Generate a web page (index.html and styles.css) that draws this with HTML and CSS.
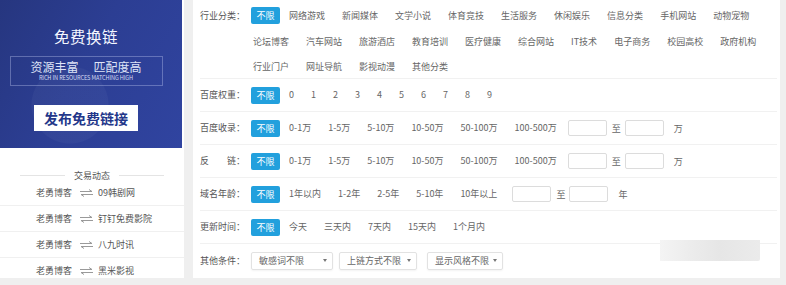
FILE: index.html
```html
<!DOCTYPE html>
<html lang="zh-CN">
<head>
  <meta charset="UTF-8">
  <title>免费换链</title>
  <link rel="stylesheet" href="styles.css">
</head>
<body>

  <div class="page">
    <aside class="side">
      <div class="banner">
        <div class="banner-title">免费换链</div>
        <div class="banner-box">
          <div class="banner-slogan"><span>资源丰富</span><span>匹配度高</span></div>
          <div class="banner-sub">RICH IN RESOURCES MATCHING HIGH</div>
        </div>
        <div class="banner-button">发布免费链接</div>
      </div>

      <div class="deals-title">交易动态</div>
      <ul class="deals">
        <li>老勇博客 <svg class="swap" width="13" height="8" viewBox="0 0 13 8"><path d="M0 2.5H12L9 0.5M13 5.5H1L4 7.5" fill="none" stroke="#9a9a9a" stroke-width="1"/></svg> 09韩剧网</li>
        <li>老勇博客 <svg class="swap" width="13" height="8" viewBox="0 0 13 8"><path d="M0 2.5H12L9 0.5M13 5.5H1L4 7.5" fill="none" stroke="#9a9a9a" stroke-width="1"/></svg> 钉钉免费影院</li>
        <li>老勇博客 <svg class="swap" width="13" height="8" viewBox="0 0 13 8"><path d="M0 2.5H12L9 0.5M13 5.5H1L4 7.5" fill="none" stroke="#9a9a9a" stroke-width="1"/></svg> 八九时讯</li>
        <li>老勇博客 <svg class="swap" width="13" height="8" viewBox="0 0 13 8"><path d="M0 2.5H12L9 0.5M13 5.5H1L4 7.5" fill="none" stroke="#9a9a9a" stroke-width="1"/></svg> 黑米影视</li>
      </ul>
    </aside>

    <main class="filters">
      <div class="row row-multi">
        <div class="label">行业分类：</div>
        <div class="opts">
          <span class="opt on">不限</span>
          <span class="opt">网络游戏</span>
          <span class="opt">新闻媒体</span>
          <span class="opt">文学小说</span>
          <span class="opt">体育竞技</span>
          <span class="opt">生活服务</span>
          <span class="opt">休闲娱乐</span>
          <span class="opt">信息分类</span>
          <span class="opt">手机网站</span>
          <span class="opt">动物宠物</span>
          <span class="opt">论坛博客</span>
          <span class="opt">汽车网站</span>
          <span class="opt">旅游酒店</span>
          <span class="opt">教育培训</span>
          <span class="opt">医疗健康</span>
          <span class="opt">综合网站</span>
          <span class="opt">IT技术</span>
          <span class="opt">电子商务</span>
          <span class="opt">校园高校</span>
          <span class="opt">政府机构</span>
          <span class="opt">行业门户</span>
          <span class="opt">网址导航</span>
          <span class="opt">影视动漫</span>
          <span class="opt">其他分类</span>
        </div>
      </div>

      <div class="row">
        <div class="label">百度权重：</div>
        <div class="opts">
          <span class="opt on">不限</span>
          <span class="opt">0</span>
          <span class="opt">1</span>
          <span class="opt">2</span>
          <span class="opt">3</span>
          <span class="opt">4</span>
          <span class="opt">5</span>
          <span class="opt">6</span>
          <span class="opt">7</span>
          <span class="opt">8</span>
          <span class="opt">9</span>
        </div>
      </div>

      <div class="row">
        <div class="label">百度收录：</div>
        <div class="opts">
          <span class="opt on">不限</span>
          <span class="opt">0-1万</span>
          <span class="opt">1-5万</span>
          <span class="opt">5-10万</span>
          <span class="opt">10-50万</span>
          <span class="opt">50-100万</span>
          <span class="opt">100-500万</span>
          <input class="range range-first" type="text">
          <span class="to">至</span>
          <input class="range" type="text">
          <span class="unit">万</span>
        </div>
      </div>

      <div class="row">
        <div class="label"><span class="spread">反链</span>：</div>
        <div class="opts">
          <span class="opt on">不限</span>
          <span class="opt">0-1万</span>
          <span class="opt">1-5万</span>
          <span class="opt">5-10万</span>
          <span class="opt">10-50万</span>
          <span class="opt">50-100万</span>
          <span class="opt">100-500万</span>
          <input class="range range-first" type="text">
          <span class="to">至</span>
          <input class="range" type="text">
          <span class="unit">万</span>
        </div>
      </div>

      <div class="row">
        <div class="label">域名年龄：</div>
        <div class="opts">
          <span class="opt on">不限</span>
          <span class="opt">1年以内</span>
          <span class="opt">1-2年</span>
          <span class="opt">2-5年</span>
          <span class="opt">5-10年</span>
          <span class="opt">10年以上</span>
          <input class="range" type="text">
          <span class="to">至</span>
          <input class="range" type="text">
          <span class="unit">年</span>
        </div>
      </div>

      <div class="row">
        <div class="label">更新时间：</div>
        <div class="opts">
          <span class="opt on">不限</span>
          <span class="opt">今天</span>
          <span class="opt">三天内</span>
          <span class="opt">7天内</span>
          <span class="opt">15天内</span>
          <span class="opt">1个月内</span>
        </div>
      </div>

      <div class="row row-last">
        <div class="label">其他条件：</div>
        <div class="opts">
          <div class="select select-a">敏感词不限<i class="caret"></i></div>
          <div class="select select-b">上链方式不限<i class="caret"></i></div>
          <div class="select select-c">显示风格不限<i class="caret"></i></div>
        </div>
      </div>

      <div class="mark"></div>
    </main>
  </div>

</body>
</html>
```

FILE: styles.css
```css
* {
  margin: 0;
  padding: 0;
  box-sizing: border-box;
}

body {
  width: 786px;
  height: 285px;
  overflow: hidden;
  background-color: #efefef;
  font-family: "Noto Sans CJK SC", "Noto Sans", sans-serif;
  font-size: 9px;
  color: #666;
}

.page {
  display: flex;
  gap: 9px;
  height: 278px;
}

/* left column */

.side {
  width: 184px;
  background-color: #fff;
  overflow: hidden;
}

.banner {
  width: 182px;
  height: 148px;
  padding-right: 10px;
  display: flex;
  flex-direction: column;
  align-items: center;
  background:
    radial-gradient(circle at 70px 105px, rgba(255, 255, 255, 0.035) 0, rgba(255, 255, 255, 0.035) 38px, transparent 39px),
    linear-gradient(120deg, #26367f 0%, #2c3e93 45%, #3044a0 100%);
}

.banner-title {
  margin-top: 26px;
  font-size: 15.5px;
  line-height: 20px;
  color: #f4f6ff;
  letter-spacing: 0.5px;
}

.banner-box {
  margin-top: 10px;
  width: 153px;
  height: 30px;
  border: 1px solid rgba(200, 210, 245, 0.35);
  text-align: center;
}

.banner-slogan {
  margin-top: 3px;
  display: flex;
  justify-content: center;
  gap: 15px;
  font-size: 12px;
  line-height: 14px;
  color: #dfe4f7;
}

.banner-sub {
  font-size: 5.6px;
  line-height: 8px;
  color: #d5dbf2;
  letter-spacing: -0.1px;
}

.banner-button {
  margin-top: 19px;
  width: 104px;
  height: 26px;
  line-height: 26px;
  background-color: #fff;
  color: #23378a;
  font-size: 14px;
  font-weight: bold;
  text-align: center;
}

.deals-title {
  display: flex;
  align-items: center;
  justify-content: center;
  padding-top: 23px;
  line-height: 9px;
  color: #555;
}

.deals-title::before,
.deals-title::after {
  content: "";
  width: 45px;
  height: 1px;
  margin: 0 9px;
  background-color: #e4e4e4;
}

.deals {
  list-style: none;
}

.deals li {
  display: flex;
  align-items: center;
  gap: 7px;
  height: 26px;
  padding-left: 36px;
  border-bottom: 1px solid #f0f0f0;
  color: #555;
}

.swap {
  margin: 0 -2px 0 1px;
}

/* right column */

.filters {
  position: relative;
  width: 587px;
  padding-left: 7px;
  background-color: #fff;
}

.row {
  display: flex;
  align-items: center;
  height: 33px;
  margin-right: 3px;
  border-bottom: 1px solid #f1f1f1;
}

.row-multi {
  height: 79px;
  align-items: flex-start;
  padding-top: 3px;
}

.row-last {
  border-bottom: none;
}

.label {
  flex: none;
  width: 51px;
  line-height: 25.5px;
  color: #555;
}

.spread {
  display: inline-block;
  width: 36px;
  text-align-last: justify;
}

.opts {
  display: flex;
  flex-wrap: wrap;
  align-items: center;
}

.row-multi .opts {
  width: 528px;
}

.opt {
  padding: 0 2px;
  margin-right: 13px;
  line-height: 25.5px;
  color: #666;
  white-space: nowrap;
}

.opt.on {
  height: 17px;
  line-height: 17px;
  padding: 0 5.5px;
  margin-right: 7px;
  border-radius: 2px;
  background-color: #22a0dd;
  color: #fff;
}

.range {
  width: 39px;
  height: 16px;
  margin-right: 5px;
  border: 1px solid #dcdcdc;
  border-radius: 2px;
  background-color: #fff;
}

.range-first {
  margin-left: -4px;
}

.to {
  margin-right: 4px;
  color: #666;
}

.unit {
  margin-left: 5px;
  color: #666;
}

.select {
  display: flex;
  align-items: center;
  justify-content: space-between;
  height: 18px;
  padding: 0 5px 0 7px;
  border: 1px solid #e2e2e2;
  border-radius: 2px;
  box-shadow: 0 1px 2px rgba(0, 0, 0, 0.05);
  color: #666;
}

.select-a {
  width: 82px;
  margin-right: 6px;
}

.select-b {
  width: 78px;
  margin-right: 10px;
}

.select-c {
  width: 76px;
}

.caret {
  width: 0;
  height: 0;
  border-left: 2.5px solid transparent;
  border-right: 2.5px solid transparent;
  border-top: 3px solid #777;
}

/* faint grey patch over the lower right corner */
.mark {
  position: absolute;
  left: 467px;
  top: 240px;
  width: 100px;
  height: 21px;
  background: linear-gradient(90deg, #f4f4f4 0%, #ececec 30%, #e6e6e6 60%, #ebebeb 100%);
  border-radius: 0 0 2px 0;
}
```
